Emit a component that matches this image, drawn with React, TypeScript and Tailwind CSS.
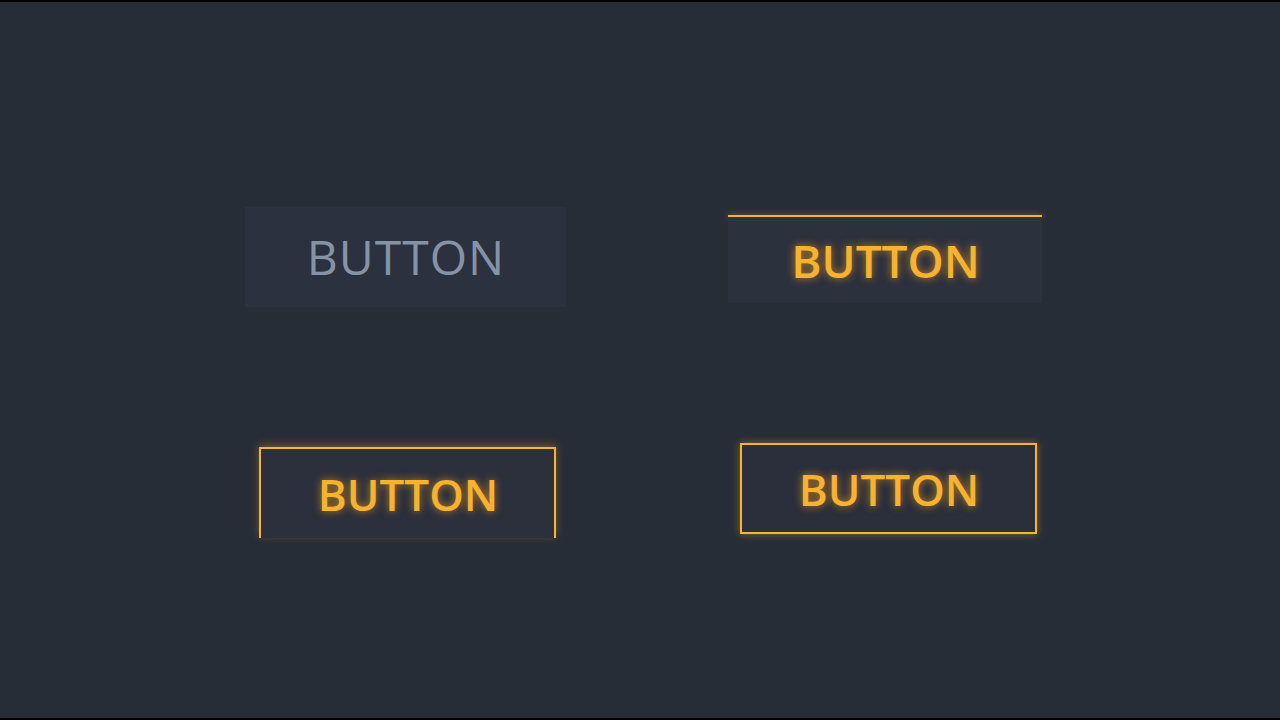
import React from "react";

const font = { fontFamily: '"Open Sans", "Noto Sans", sans-serif' };

export default function App() {
  return (
    <div
      className="w-[1280px] h-[720px] bg-[#272d37] border-t-2 border-b-2 border-black flex flex-col"
      style={font}
    >
      <div className="h-[205px]" />
      <div className="flex h-[102px]">
        <div className="w-[245px]" />
        <div className="w-[321px] h-[100px] bg-[#2c313f] flex items-center justify-center">
          <span className="text-[48px] font-medium tracking-[1px] text-[#8593a5] leading-none pl-[1px]">BUTTON</span>
        </div>
        <div className="w-[162px]" />
        <div className="w-[314px] flex flex-col pt-[8px]">
          <div className="h-[2px] bg-[#f6b52c] shadow-[0_0_6px_rgba(246,170,40,0.6)]" />
          <div className="h-[86px] bg-[#2c313e] flex items-center justify-center">
            <span className="text-[46px] font-semibold tracking-[0px] text-[#f7b230] leading-none pl-[1px] [text-shadow:0_0_8px_rgba(247,160,30,0.75)]">BUTTON</span>
          </div>
        </div>
      </div>
      <div className="h-[134px]" />
      <div className="flex h-[100px]">
        <div className="w-[259px]" />
        <div className="w-[297px] h-[91px] mt-[4px] border-2 border-b-0 border-[#f6b52c] bg-[#2b303c] shadow-[0_-2px_8px_rgba(246,170,40,0.35)] flex items-center justify-center">
          <span className="text-[44px] font-semibold tracking-[0px] text-[#f7b230] leading-none pl-[1px] [text-shadow:0_0_8px_rgba(247,160,30,0.75)]">BUTTON</span>
        </div>
        <div className="w-[184px]" />
        <div className="w-[297px] h-[91px] border-2 border-[#f6b52c] bg-[#2a2f3b] shadow-[0_0_8px_rgba(246,170,40,0.45)] flex items-center justify-center">
          <span className="text-[44px] font-semibold tracking-[0px] text-[#f7b230] leading-none pl-[1px] [text-shadow:0_0_8px_rgba(247,160,30,0.75)]">BUTTON</span>
        </div>
      </div>
    </div>
  );
}
